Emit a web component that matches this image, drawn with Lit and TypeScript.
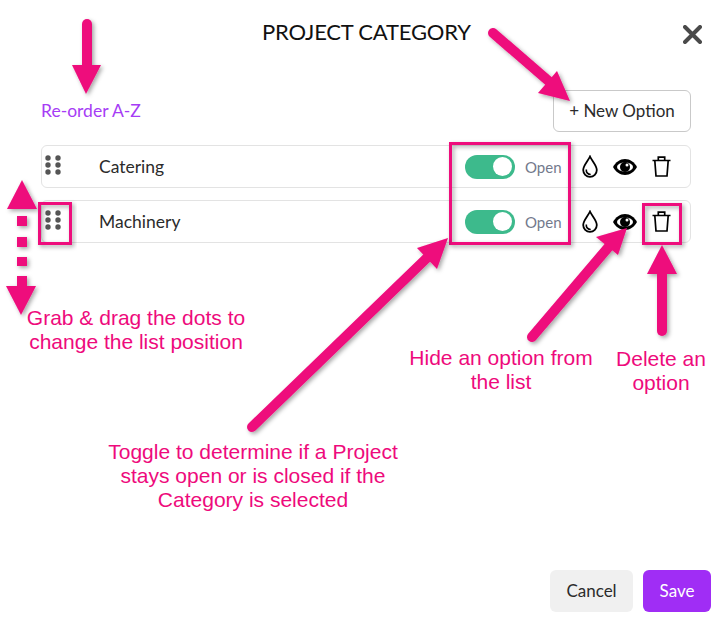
import { LitElement, html, css, svg } from "lit";
import { customElement } from "lit/decorators.js";

const PINK = "#ee0a7c";

const shaft = (x1: number, y1: number, x2: number, y2: number) =>
  svg`<line x1=${x1} y1=${y1} x2=${x2} y2=${y2} stroke=${PINK} stroke-width="10" stroke-linecap="round"/>`;
const head = (pts: string) => svg`<polygon points=${pts} fill=${PINK}/>`;
const box = (x: number, y: number, w: number, h: number) =>
  svg`<rect x=${x} y=${y} width=${w} height=${h} fill="none" stroke=${PINK} stroke-width="3"/>`;
const dash = (y: number, h: number) => svg`<rect x="17" y=${y} width="10" height=${h} fill=${PINK}/>`;

const rows = ["Catering", "Machinery"];

@customElement("app-root")
export class AppRoot extends LitElement {
  static styles = css`
    :host {
      display: block;
      position: relative;
      width: 728px;
      height: 633px;
      overflow: hidden;
      background: #fff;
      font-family: Lato, sans-serif;
      color: #2b2b2b;
    }
    .modal {
      height: 633px;
      box-sizing: border-box;
      display: flex;
      flex-direction: column;
      padding: 17px 17px 21px 41px;
    }
    .head {
      display: flex;
      align-items: center;
      justify-content: space-between;
      height: 30px;
      padding-left: 221px;
    }
    .title {
      font-size: 22px;
      letter-spacing: -0.2px;
      line-height: 30px;
      color: #111;
    }
    .close {
      width: 19px;
      height: 19px;
      margin-top: 4px;
      margin-right: 9px;
      display: block;
    }
    .tools {
      display: flex;
      align-items: center;
      justify-content: space-between;
      margin-top: 43px;
      width: 650px;
    }
    .reorder {
      font-size: 17.5px;
      color: #a63cf5;
      margin-top: -2px;
    }
    .new {
      box-sizing: border-box;
      width: 138px;
      height: 42px;
      border: 1px solid #c9c9c9;
      border-radius: 6px;
      background: #fff;
      font: 17px Lato, sans-serif;
      color: #2b2b2b;
      padding: 0 0 2px;
    }
    .list {
      display: flex;
      flex-direction: column;
      gap: 12px;
      margin-top: 13px;
      width: 650px;
    }
    .row {
      box-sizing: border-box;
      height: 43px;
      border: 1px solid #e3e3e3;
      border-radius: 6px;
      display: flex;
      align-items: center;
      padding-left: 2px;
    }
    .grip {
      width: 18px;
      height: 20px;
      display: block;
      margin-top: -3px;
    }
    .label {
      margin-left: 37px;
      flex: 1;
      font-size: 17.5px;
    }
    .toggle {
      width: 50px;
      height: 24px;
      border-radius: 12px;
      background: #3dba8c;
      display: flex;
      align-items: center;
      justify-content: flex-end;
      padding-right: 3px;
      box-sizing: border-box;
    }
    .knob {
      width: 19px;
      height: 19px;
      border-radius: 50%;
      background: #fff;
    }
    .state {
      margin-left: 10px;
      width: 37px;
      font-size: 15px;
      color: #737a8c;
    }
    .icons {
      display: flex;
      align-items: center;
      margin-left: 20px;
      margin-right: 19px;
    }
    .drop { width: 16px; height: 23px; display: block; }
    .eye { width: 24px; height: 16px; display: block; margin-left: 15px; }
    .trash { width: 19px; height: 21px; display: block; margin-left: 15px; }
    .foot {
      margin-top: auto;
      display: flex;
      justify-content: flex-end;
      gap: 10px;
    }
    .foot button {
      height: 42px;
      border: 0;
      border-radius: 6px;
      font: 17px Lato, sans-serif;
      padding: 0 0 2px;
    }
    .cancel { width: 83px; background: #f0f0f0; color: #2b2b2b; }
    .save { width: 68px; background: #a02df5; color: #fff; }
    .marks {
      position: absolute;
      inset: 0;
      width: 728px;
      height: 633px;
      pointer-events: none;
    }
    .note {
      position: absolute;
      transform: translateX(-50%);
      white-space: nowrap;
      text-align: center;
      font: 21px/24px "Liberation Sans", Arial, sans-serif;
      color: #ee0a7c;
    }
    .n1 { left: 136px; top: 306px; }
    .n2 { left: 501px; top: 346px; }
    .n3 { left: 661px; top: 347px; }
    .n4 { left: 253px; top: 440px; }
  `;

  private grip() {
    return html`<svg class="grip" viewBox="0 0 18 20" fill="#555">
      <circle cx="4" cy="3" r="2.7"/><circle cx="14" cy="3" r="2.7"/>
      <circle cx="4" cy="10" r="2.7"/><circle cx="14" cy="10" r="2.7"/>
      <circle cx="4" cy="17" r="2.7"/><circle cx="14" cy="17" r="2.7"/>
    </svg>`;
  }

  private icons() {
    return html`<div class="icons">
      <svg class="drop" viewBox="0 0 16 23" fill="none" stroke="#000">
        <path stroke-width="1.8" d="M8 1.500C6 6 1.200 10.500 1.200 15a6.800 6.800 0 0 0 13.600 0C14.800 10.500 10 6 8 1.500Z"/>
        <path stroke-width="1.6" d="M4.300 14.500c-.4 3 1.800 5 4.400 5"/>
      </svg>
      <svg class="eye" viewBox="0 0 24 16">
        <path fill="#000" d="M12 0C7 0 2.600 3.200 0 8c2.600 4.800 7 8 12 8s9.400-3.200 12-8C21.400 3.200 17 0 12 0Z"/>
        <ellipse cx="12" cy="8" rx="8" ry="4.600" fill="#fff"/>
        <circle cx="12" cy="8" r="5" fill="#000"/>
        <circle cx="14" cy="6" r="1.500" fill="#fff"/>
      </svg>
      <svg class="trash" viewBox="0 0 19 21" fill="none" stroke="#000" stroke-width="1.7">
        <path d="M0.500 4.500h18M6.300 4.500V1.200h6.400v3.300M2.800 4.500l1.200 15.500h11l1.200-15.500"/>
      </svg>
    </div>`;
  }

  render() {
    return html`
      <div class="modal">
        <div class="head">
          <div class="title">PROJECT CATEGORY</div>
          <svg class="close" viewBox="0 0 19 19">
            <path d="M2 2l15 15M17 2L2 17" stroke="#4a4a4a" stroke-width="4" stroke-linecap="round"/>
          </svg>
        </div>
        <div class="tools">
          <div class="reorder">Re-order A-Z</div>
          <button class="new">+ New Option</button>
        </div>
        <div class="list">
          ${rows.map(
            (r) => html`<div class="row">
              ${this.grip()}
              <div class="label">${r}</div>
              <div class="toggle"><div class="knob"></div></div>
              <div class="state">Open</div>
              ${this.icons()}
            </div>`
          )}
        </div>
        <div class="foot">
          <button class="cancel">Cancel</button>
          <button class="save">Save</button>
        </div>
      </div>

      <svg class="marks" viewBox="0 0 728 633">
        <defs>
          <filter id="sh" x="-20%" y="-20%" width="140%" height="140%">
            <feDropShadow dx="2" dy="2" stdDeviation="2" flood-color="#000" flood-opacity="0.35"/>
          </filter>
        </defs>
        <g filter="url(#sh)">
          ${shaft(87, 24, 87, 70)}${head("72,65 101,65 86,94")}
        </g>
        <g filter="url(#sh)">
          ${shaft(493, 33, 552, 84)}${head("557,71 538,93 570,101")}
        </g>
        <g filter="url(#sh)">
          ${head("22,180 7,209 37,209")}
          ${dash(216, 10)}${dash(237, 10)}${dash(257, 9)}${dash(276, 12)}
          ${head("6,286 36,286 21,315")}
        </g>
        <g filter="url(#sh)">${box(39.5, 203.5, 31, 40)}</g>
        <g filter="url(#sh)">${box(450.5, 143.5, 119, 100)}</g>
        <g filter="url(#sh)">${box(643.5, 204.5, 37, 39)}</g>
        <g filter="url(#sh)">
          ${shaft(252, 427, 432, 253)}${head("417,248 437,269 448,238")}
        </g>
        <g filter="url(#sh)">
          ${shaft(532, 337, 612, 243)}${head("596,237 618,255 627,228")}
        </g>
        <g filter="url(#sh)">
          ${shaft(662, 270, 662, 331)}${head("662,245 647,274 677,274")}
        </g>
      </svg>

      <div class="note n1">Grab &amp; drag the dots to<br />change the list position</div>
      <div class="note n2">Hide an option from<br />the list</div>
      <div class="note n3">Delete an<br />option</div>
      <div class="note n4">Toggle to determine if a Project<br />stays open or is closed if the<br />Category is selected</div>
    `;
  }
}
